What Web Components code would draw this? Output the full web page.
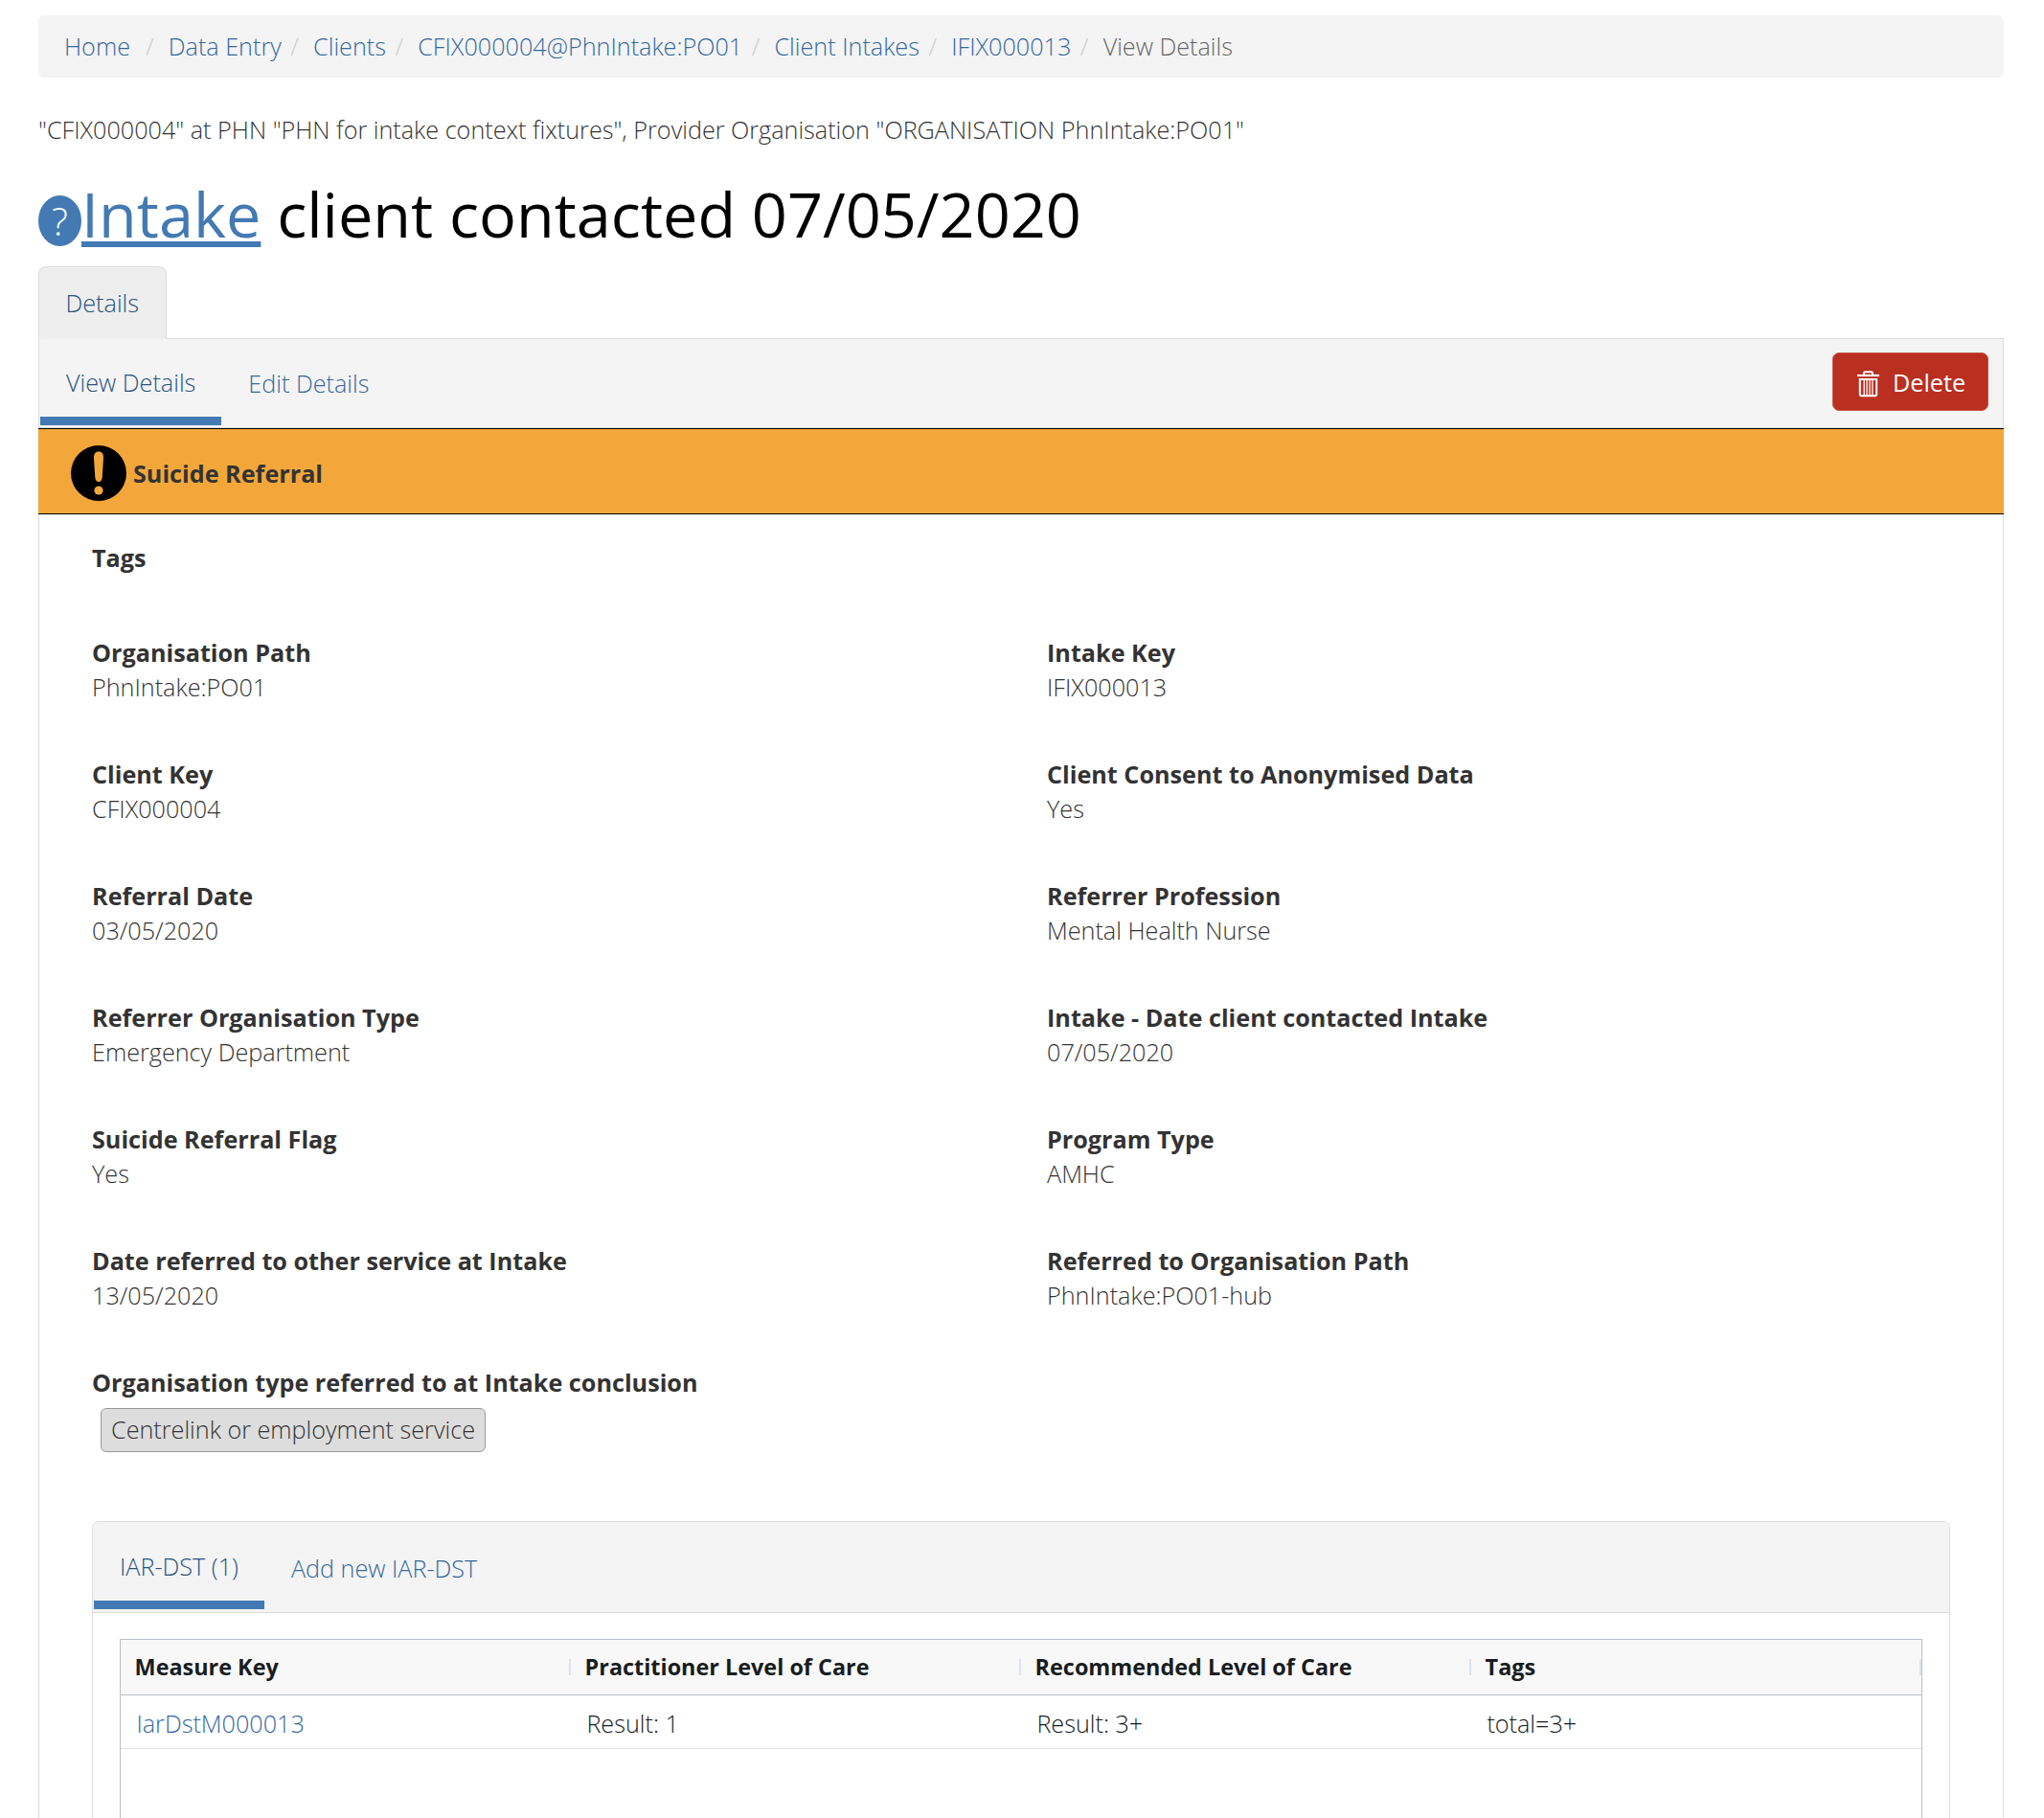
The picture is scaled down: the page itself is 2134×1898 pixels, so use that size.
<!DOCTYPE html>
<html lang="en">
<head>
<meta charset="utf-8">
<title>Intake details</title>
<style>
html{background:#fff}
body{margin:0;font:300 25.2px/36px "Open Sans",sans-serif;color:#333}
</style>
</head>
<body>
<intake-page></intake-page>
<script>
function define(name, css, html) {
  const template = document.createElement('template');
  template.innerHTML = '<style>:host{flex-shrink:0}*{box-sizing:border-box;flex-shrink:0}a{text-decoration:none;color:#36699d}' + css + '</style>' + html;
  customElements.define(name, class extends HTMLElement {
    constructor() {
      super();
      this.attachShadow({ mode: 'open' }).appendChild(template.content.cloneNode(true));
    }
  });
}

define('crumb-item', `
:host{display:flex;white-space:nowrap}
:host::before{content:"/";color:#ccc;padding:0 15.2px 0 9.5px}
:host([first])::before{content:none}
:host([first]){margin-right:6.5px}
:host([current]){color:#666}
:host(:not([current])){color:#36699d}
`, '<slot></slot>');

define('crumb-bar', `
:host{display:flex;height:65px;padding:14px 27px;background:#f4f4f4;border-radius:6px;box-sizing:border-box}
`, '<slot></slot>');

define('help-badge', `
:host{display:flex;width:45px;height:53px;border-radius:50%;background:#437ab3;color:#fff;justify-content:center;font:300 40px/53px "Open Sans",sans-serif}
`, '<span>?</span>');

define('page-heading', `
:host{display:flex;align-items:flex-start;height:88px;white-space:nowrap}
help-badge{margin-top:14px}
h1{margin:0;font-size:64.8px;line-height:66px;font-weight:400;color:#000}
a{color:#437ab3;text-decoration:underline;text-decoration-thickness:6px;text-underline-offset:4px;text-decoration-skip-ink:none}
`, '<help-badge></help-badge><h1><a><slot name="link"></slot></a><slot></slot></h1>');

define('outer-tab', `
:host{display:flex;width:134px;height:76px;padding:19px 0 0 27.5px;margin-bottom:-1px;position:relative;background:#eee;border:1px solid #ddd;border-bottom:0;border-radius:8px 8px 0 0;box-sizing:border-box;color:#2a5380}
`, '<slot></slot>');

define('sub-tab', `
:host{display:flex;flex-direction:column;padding:var(--t,28px) 27px 0;margin-right:1px;color:#36699d;box-sizing:border-box;white-space:nowrap}
:host([active]){color:#2a5380;padding-top:var(--ta,27px);border-bottom:9px solid #437ab3}
`, '<slot></slot>');

define('tab-strip', `
:host{display:flex;background:#f4f4f4;border-bottom:1px solid #ddd;box-sizing:border-box;padding:0 0 2px 1px}
::slotted(delete-button){margin:14px 15px 0 auto}
`, '<slot></slot>');

define('delete-button', `
:host{display:flex;width:163px;height:61px;background:#b92f20;border:1px solid #c9574b;border-radius:7px;color:#fff;font-weight:400;box-sizing:border-box;padding:12px 0 0 25px}
svg{display:block;margin:6px 14px 0 0}
`, `<svg width="23" height="28" viewBox="0 0 23 28" fill="none" stroke="#fff"><path d="M0 5H23" stroke-width="2.2"/><path d="M7 5V2.6Q7 1.2 8.4 1.2H14.6Q16 1.2 16 2.6V5" stroke-width="2"/><path d="M2.8 8.9H20.2V24.6Q20.2 26.2 18.6 26.2H4.4Q2.8 26.2 2.8 24.6Z" stroke-width="2"/><path d="M7.2 9V26M10.1 9V26M13 9V26M15.9 9V26" stroke-width="1.3"/></svg><slot></slot>`);

define('alert-banner', `
:host{display:flex;align-items:flex-start;height:90px;margin:0 -1px;padding:17px 0 0 34px;background:#f3a73b;border:solid #000;border-width:1px 0;box-sizing:border-box;font-weight:700}
svg{display:block;margin-right:7px}
span{margin-top:11px}
`, `<svg width="58" height="58" viewBox="0 0 58 58"><circle cx="29" cy="29" r="29" fill="#000"/><path d="M29 6.5C32.5 6.5 34 9 34 12.5L32.7 33.5Q32 38 29 38Q26 38 25.3 33.5L24 12.5C24 9 25.500 6.500 29 6.500Z" fill="#f3a73b"/><circle cx="29" cy="47" r="4.600" fill="#f3a73b"/></svg><span><slot></slot></span>`);

define('detail-field', `
:host{display:block;white-space:nowrap}
b{display:block;font-weight:700}
`, '<b><slot name="label"></slot></b><slot></slot>');

define('field-grid', `
:host{display:grid;grid-template-columns:997px 1fr;grid-auto-rows:127px}
`, '<slot></slot>');

define('value-chip', `
:host{display:block;width:max-content;height:46px;margin:9px 0 0 9px;padding:3px 10px 0;background:#ddd;border:1px solid #999;border-radius:6px;box-sizing:border-box}
`, '<slot></slot>');

define('data-grid', `
:host{display:flex;flex-direction:column;border:1px solid #babfc7;height:300px;color:#181d1f;box-sizing:border-box}
`, '<slot></slot>');

define('grid-row', `
:host{display:grid;grid-template-columns:repeat(4,470px);height:56px;border-bottom:1px solid #dde2eb;box-sizing:border-box}
:host([head]){height:58px;background:#f8f8f8;border-bottom-color:#babfc7;font-weight:700;font-size:23.4px}
`, '<slot></slot>');

define('grid-cell', `
:host{display:flex;justify-content:space-between;padding:11px 0 0 16.4px;white-space:nowrap;box-sizing:border-box;overflow:hidden}
:host([head]){padding:10px 0 0 14.6px}
:host([head])::after{content:"";width:2px;height:17px;margin-top:10px;background:#dde2eb}
`, '<slot></slot>');

define('measure-panel', `
:host{display:flex;flex-direction:column;border:1px solid #ddd;border-radius:7px 7px 0 0;box-sizing:border-box;height:400px}
tab-strip{height:95px;--t:30px;--ta:28px;border-radius:6px 6px 0 0;padding-bottom:3px}
data-grid{margin:27px 28px 0}
`, `<tab-strip><sub-tab active>IAR-DST (1)</sub-tab><sub-tab>Add new IAR-DST</sub-tab></tab-strip>
<data-grid>
<grid-row head><grid-cell head>Measure Key</grid-cell><grid-cell head>Practitioner Level of Care</grid-cell><grid-cell head>Recommended Level of Care</grid-cell><grid-cell head>Tags</grid-cell></grid-row>
<grid-row><grid-cell><a>IarDstM000013</a></grid-cell><grid-cell>Result: 1</grid-cell><grid-cell>Result: 3+</grid-cell><grid-cell>total=3+</grid-cell></grid-row>
</data-grid>`);

define('detail-panel', `
:host{display:flex;flex-direction:column;border:1px solid #ddd;border-bottom:0;box-sizing:border-box;height:1600px}
tab-strip{height:93px}
.body{padding:27px 55px 0}
.tags{height:99px}
.last{height:163px}
`, `<tab-strip><sub-tab active>View Details</sub-tab><sub-tab>Edit Details</sub-tab><delete-button>Delete</delete-button></tab-strip>
<alert-banner>Suicide Referral</alert-banner>
<div class="body">
<detail-field class="tags"><span slot="label">Tags</span></detail-field>
<field-grid>
<detail-field><span slot="label">Organisation Path</span>PhnIntake:PO01</detail-field>
<detail-field><span slot="label">Intake Key</span>IFIX000013</detail-field>
<detail-field><span slot="label">Client Key</span>CFIX000004</detail-field>
<detail-field><span slot="label">Client Consent to Anonymised Data</span>Yes</detail-field>
<detail-field><span slot="label">Referral Date</span>03/05/2020</detail-field>
<detail-field><span slot="label">Referrer Profession</span>Mental Health Nurse</detail-field>
<detail-field><span slot="label">Referrer Organisation Type</span>Emergency Department</detail-field>
<detail-field><span slot="label">Intake - Date client contacted Intake</span>07/05/2020</detail-field>
<detail-field><span slot="label">Suicide Referral Flag</span>Yes</detail-field>
<detail-field><span slot="label">Program Type</span>AMHC</detail-field>
<detail-field><span slot="label">Date referred to other service at Intake</span>13/05/2020</detail-field>
<detail-field><span slot="label">Referred to Organisation Path</span>PhnIntake:PO01-hub</detail-field>
</field-grid>
<detail-field class="last"><span slot="label">Organisation type referred to at Intake conclusion</span><value-chip>Centrelink or employment service</value-chip></detail-field>
<measure-panel></measure-panel>
</div>`);

define('intake-page', `
:host{display:flex;flex-direction:column;height:1898px;padding:16px 42px 0 40px;overflow:hidden;box-sizing:border-box}
p{margin:36px 0 37px;white-space:nowrap}
`, `<crumb-bar><crumb-item first>Home</crumb-item><crumb-item>Data Entry</crumb-item><crumb-item>Clients</crumb-item><crumb-item>CFIX000004@PhnIntake:PO01</crumb-item><crumb-item>Client Intakes</crumb-item><crumb-item>IFIX000013</crumb-item><crumb-item current>View Details</crumb-item></crumb-bar>
<p>"CFIX000004" at PHN "PHN for intake context fixtures", Provider Organisation "ORGANISATION PhnIntake:PO01"</p>
<page-heading><span slot="link">Intake</span> client contacted 07/05/2020</page-heading>
<outer-tab>Details</outer-tab>
<detail-panel></detail-panel>`);
</script>
</body>
</html>
